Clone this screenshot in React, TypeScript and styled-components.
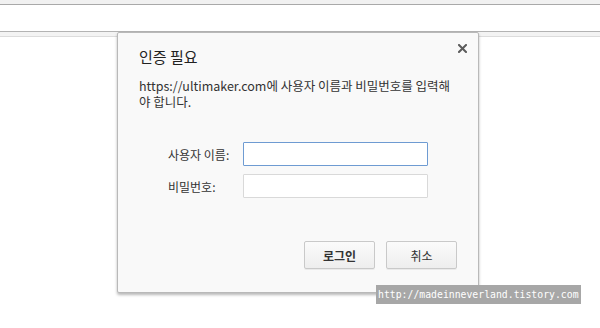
import React from 'react';
import styled, { createGlobalStyle } from 'styled-components';

const GlobalStyle = createGlobalStyle`
  html, body {
    margin: 0;
    padding: 0;
    background: #ffffff;
    overflow: hidden;
  }
  body {
    font-family: "Noto Sans CJK KR", "Noto Sans", sans-serif;
  }
`;

const Page = styled.div`
  position: relative;
  width: 600px;
  height: 328px;
  background: #ffffff;
`;

const TabStrip = styled.div`
  height: 4px;
  background: #f1f1f1;
  border-bottom: 1px solid #a9a9a9;
`;

const AddressBar = styled.div`
  height: 26px;
  background: #ffffff;
`;

const InfoBar = styled.div`
  height: 4px;
  background: #f3f3f3;
  border-top: 1px solid #b3b3b3;
  border-bottom: 1px solid #dcdcdc;
`;

const Dialog = styled.div`
  position: absolute;
  left: 117px;
  top: 32px;
  width: 318px;
  padding: 14px 21px 23px 21px;
  background: #f9f9f9;
  border: 1px solid #b9b9b9;
  border-radius: 2px;
  box-shadow: 0 2px 3px rgba(0, 0, 0, 0.28);
  display: flex;
  flex-direction: column;
`;

const HeaderRow = styled.div`
  display: flex;
  justify-content: space-between;
  align-items: flex-start;
`;

const Title = styled.h1`
  margin: 0;
  font-size: 15px;
  line-height: 20px;
  font-weight: 400;
  color: #222222;
`;

const CloseButton = styled.button`
  width: 11px;
  height: 11px;
  margin: -4px -11px 0 0;
  padding: 0;
  border: none;
  background: transparent;
  display: flex;
  align-items: center;
  justify-content: center;
  cursor: pointer;
`;

const Message = styled.p`
  margin: 11px 0 0 0;
  font-size: 12.5px;
  line-height: 16px;
  color: #333333;
  word-break: break-all;
`;

const Form = styled.div`
  margin: 32px 0 0 29px;
  display: grid;
  grid-template-columns: 70px 185px;
  column-gap: 5px;
  row-gap: 8px;
  align-items: center;
`;

const Label = styled.label`
  font-size: 12px;
  color: #333333;
  white-space: nowrap;
`;

const Field = styled.input<{ $focused?: boolean }>`
  box-sizing: border-box;
  width: 185px;
  height: 24px;
  margin: 0;
  padding: 0 4px;
  background: #ffffff;
  border: 1px solid ${p => (p.$focused ? '#6e9bd2' : '#d9d9d9')};
  border-radius: 1px;
  outline: none;
  font-size: 12px;
`;

const Buttons = styled.div`
  margin-top: 43px;
  display: flex;
  justify-content: flex-end;
  gap: 11px;
`;

const DialogButton = styled.button<{ $bold?: boolean }>`
  box-sizing: border-box;
  width: 71px;
  height: 28px;
  padding: 0;
  border: 1px solid #c9c9c9;
  border-radius: 2px;
  background: linear-gradient(#fbfbfb, #eeeeee);
  box-shadow: 0 1px 0 rgba(0, 0, 0, 0.06);
  font-family: "Noto Sans CJK KR", sans-serif;
  font-size: 12px;
  font-weight: ${p => (p.$bold ? 700 : 400)};
  color: #333333;
  cursor: pointer;
`;

const Watermark = styled.div`
  position: absolute;
  left: 376px;
  top: 285px;
  width: 205px;
  height: 19px;
  padding-left: 2px;
  box-sizing: border-box;
  background: #a7a7a7;
  color: #ffffff;
  font-family: "DejaVu Sans Mono", monospace;
  font-size: 9.8px;
  line-height: 19px;
  white-space: nowrap;
  overflow: hidden;
`;

const CloseIcon = () => (
  <svg width="9" height="9" viewBox="0 0 9 9">
    <path d="M1 1 L8 8 M8 1 L1 8" stroke="#5b5b5b" strokeWidth="2" strokeLinecap="square" />
  </svg>
);

const App: React.FC = () => {
  return (
    <Page>
      <GlobalStyle />
      <TabStrip />
      <AddressBar />
      <InfoBar />

      <Dialog>
        <HeaderRow>
          <Title>인증 필요</Title>
          <CloseButton aria-label="닫기">
            <CloseIcon />
          </CloseButton>
        </HeaderRow>
        <Message>https://ultimaker.com에 사용자 이름과 비밀번호를 입력해야 합니다.</Message>

        <Form>
          <Label>사용자 이름:</Label>
          <Field type="text" $focused />
          <Label>비밀번호:</Label>
          <Field type="password" />
        </Form>

        <Buttons>
          <DialogButton $bold>로그인</DialogButton>
          <DialogButton>취소</DialogButton>
        </Buttons>
      </Dialog>

      <Watermark>http://madeinneverland.tistory.com</Watermark>
    </Page>
  );
};

export default App;
